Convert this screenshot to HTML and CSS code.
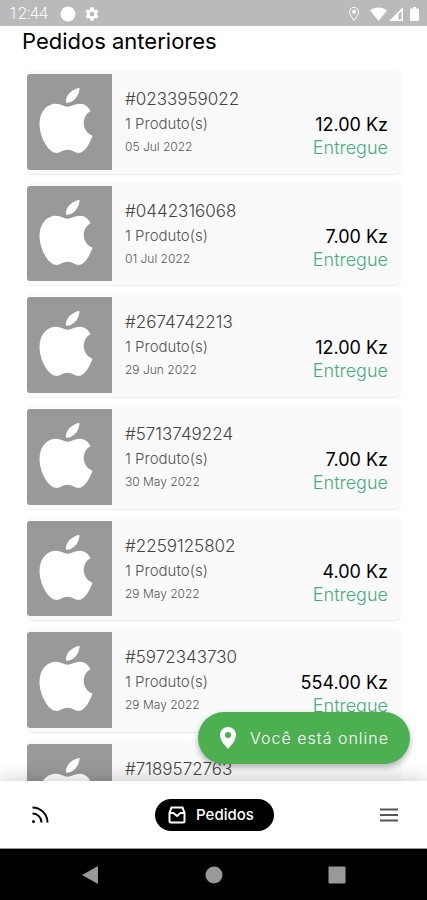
FILE: index.html
```html
<!DOCTYPE html>
<html lang="pt">
<head>
<meta charset="utf-8">
<meta name="viewport" content="width=device-width, initial-scale=1">
<title>Pedidos anteriores</title>
<link rel="stylesheet" href="styles.css">
</head>
<body>
<svg width="0" height="0" class="defs" aria-hidden="true">
  <symbol id="apple" viewBox="0 0 85 95">
    <path d="M52.500 13.500C53 20 47 29 39 28.500C38 21 45 15 52.500 13.500Z"/>
    <path d="M63.500 37C54 42 54.500 57 65.500 61.500C62.500 69.500 58.500 77 53 78.500C48.500 79.500 46 75.500 40.500 75.500C35 75.500 33 79.500 28 78.500C19 76 12.500 60 12.500 50C12.500 37 20 29.500 29 29.500C34 29.500 37 32.500 40.500 32.500C44 32.500 48 29.500 53 29.500C57.500 29.500 61.500 32.500 63.500 37Z"/>
  </symbol>
</svg>
<div class="app">
  <header class="status">
    <div class="status-group">
      <span class="clock">12:44</span>
      <svg width="16" height="16" viewBox="0 0 16 16"><circle cx="8" cy="8" r="7.500"/></svg>
      <svg width="16" height="16" viewBox="0 0 24 24"><path d="M19.400 13a7 7 0 0 0 0-2l2.100-1.600a.5.5 0 0 0 .1-.6l-2-3.500a.5.5 0 0 0-.6-.2l-2.500 1a7.300 7.300 0 0 0-1.700-1l-.4-2.600a.5.5 0 0 0-.5-.5h-4a.5.5 0 0 0-.5.500L9 5.100a7.700 7.700 0 0 0-1.700 1l-2.500-1a.5.5 0 0 0-.6.200l-2 3.500a.5.5 0 0 0 .1.600L4.500 11a8 8 0 0 0 0 2l-2.100 1.600a.5.5 0 0 0-.1.600l2 3.500c.1.200.4.300.6.200l2.500-1c.5.400 1.100.8 1.700 1l.4 2.600c0 .3.200.5.500.5h4c.3 0 .5-.2.500-.5l.4-2.600a7.300 7.300 0 0 0 1.700-1l2.500 1c.2.100.5 0 .6-.2l2-3.500a.5.5 0 0 0-.1-.6zM12 15.500a3.500 3.500 0 1 1 0-7 3.500 3.500 0 0 1 0 7z"/></svg>
    </div>
    <div class="status-group right">
      <svg class="pin" width="12" height="16" viewBox="0 0 12 16"><path class="line" d="M6 14.500C3 10.500 1.500 8 1.500 5.800a4.500 4.500 0 0 1 9 0C10.500 8 9 10.500 6 14.500Z"/><circle cx="6" cy="5.800" r="2"/></svg>
      <svg width="17" height="14" viewBox="0 0 17 14"><path d="M0 3.500C5-.5 12-.5 17 3.500L8.500 14Z"/></svg>
      <svg width="14" height="14" viewBox="0 0 14 14"><path fill-rule="evenodd" d="M14 0V14H0ZM12.500 4L9.500 7V12.500H12.500Z"/></svg>
      <svg class="battery" width="9" height="14" viewBox="0 0 9 14"><path d="M3 0h3v1.500h2a1 1 0 0 1 1 1V13a1 1 0 0 1-1 1H1a1 1 0 0 1-1-1V2.500a1 1 0 0 1 1-1h2Z"/></svg>
    </div>
  </header>

  <main class="content">
    <h1>Pedidos anteriores</h1>
    <ul class="orders">
      <li class="order">
        <div class="thumb"><svg viewBox="0 0 85 95"><use href="#apple"/></svg></div>
        <div class="info"><span class="number">#0233959022</span><span class="items">1 Produto(s)</span><span class="date">05 Jul 2022</span></div>
        <div class="total"><span class="price">12.00 Kz</span><span class="state">Entregue</span></div>
      </li>
      <li class="order">
        <div class="thumb"><svg viewBox="0 0 85 95"><use href="#apple"/></svg></div>
        <div class="info"><span class="number">#0442316068</span><span class="items">1 Produto(s)</span><span class="date">01 Jul 2022</span></div>
        <div class="total"><span class="price">7.00 Kz</span><span class="state">Entregue</span></div>
      </li>
      <li class="order">
        <div class="thumb"><svg viewBox="0 0 85 95"><use href="#apple"/></svg></div>
        <div class="info"><span class="number">#2674742213</span><span class="items">1 Produto(s)</span><span class="date">29 Jun 2022</span></div>
        <div class="total"><span class="price">12.00 Kz</span><span class="state">Entregue</span></div>
      </li>
      <li class="order">
        <div class="thumb"><svg viewBox="0 0 85 95"><use href="#apple"/></svg></div>
        <div class="info"><span class="number">#5713749224</span><span class="items">1 Produto(s)</span><span class="date">30 May 2022</span></div>
        <div class="total"><span class="price">7.00 Kz</span><span class="state">Entregue</span></div>
      </li>
      <li class="order">
        <div class="thumb"><svg viewBox="0 0 85 95"><use href="#apple"/></svg></div>
        <div class="info"><span class="number">#2259125802</span><span class="items">1 Produto(s)</span><span class="date">29 May 2022</span></div>
        <div class="total"><span class="price">4.00 Kz</span><span class="state">Entregue</span></div>
      </li>
      <li class="order">
        <div class="thumb"><svg viewBox="0 0 85 95"><use href="#apple"/></svg></div>
        <div class="info"><span class="number">#5972343730</span><span class="items">1 Produto(s)</span><span class="date">29 May 2022</span></div>
        <div class="total"><span class="price">554.00 Kz</span><span class="state">Entregue</span></div>
      </li>
      <li class="order">
        <div class="thumb"><svg viewBox="0 0 85 95"><use href="#apple"/></svg></div>
        <div class="info"><span class="number">#7189572763</span></div>
      </li>
    </ul>
  </main>

  <div class="dock">
    <button class="online" type="button">
      <svg width="16" height="22" viewBox="0 0 16 22"><path fill-rule="evenodd" d="M8 0a8 8 0 0 1 8 8c0 5-4 9.500-8 14C4 17.500 0 13 0 8a8 8 0 0 1 8-8Zm0 5a3 3 0 1 0 0 6 3 3 0 0 0 0-6Z"/></svg>
      Você está online
    </button>
    <nav class="tabs">
      <a class="tab" href="#feed" aria-label="Feed"><svg width="18" height="18" viewBox="0 0 18 18"><path d="M1.500 1.500A15 15 0 0 1 16.500 16.500M1.500 7.500A9 9 0 0 1 10.500 16.500"/><circle cx="2.500" cy="15.500" r="1.500"/></svg></a>
      <a class="tab active" href="#pedidos"><svg width="18" height="18" viewBox="0 0 18 18"><path d="M1.500 7L3.500 1.500H14.500L16.500 7V15a1.500 1.500 0 0 1-1.500 1.500H3A1.500 1.500 0 0 1 1.500 15ZM1.500 7H5.500L9 10L12.500 7H16.500"/></svg>Pedidos</a>
      <a class="tab" href="#menu" aria-label="Menu"><svg class="menu" width="18" height="14" viewBox="0 0 18 14"><path d="M0 1.500H18M0 7H18M0 12.500H18"/></svg></a>
    </nav>
  </div>

  <div class="system">
    <button type="button" aria-label="Voltar"><svg width="18" height="20" viewBox="0 0 18 20"><path d="M17 1V19L1 10Z"/></svg></button>
    <button type="button" aria-label="Início"><svg width="18" height="18" viewBox="0 0 18 18"><circle cx="9" cy="9" r="8.500"/></svg></button>
    <button type="button" aria-label="Recentes"><svg width="18" height="18" viewBox="0 0 18 18"><rect x="0.500" y="0.500" width="17" height="17" rx="1"/></svg></button>
  </div>
</div>
</body>
</html>
```
FILE: styles.css
```css
* {
  box-sizing: border-box;
}

body {
  margin: 0;
  background: #fff;
  color: #000;
  font-family: Inter, sans-serif;
}

svg {
  display: block;
  flex: none;
}

.defs {
  position: absolute;
}

button {
  padding: 0;
  border: 0;
  background: none;
  font: inherit;
}

.app {
  display: flex;
  flex-direction: column;
  height: 100vh;
}

.status {
  display: flex;
  justify-content: space-between;
  align-items: center;
  flex: none;
  height: 26px;
  padding: 2px 8px 0 9px;
  background: #bababa;
  color: #fff;
  fill: #fff;
}

.status-group {
  display: flex;
  align-items: center;
  gap: 8px;
}

.status-group.right {
  gap: 2px;
}

.clock {
  margin-right: 4px;
  font: 16px/20px Roboto, sans-serif;
  font-weight: 300;
}

.pin {
  margin-right: 8px;
}

.battery {
  margin-left: 5px;
}

.line {
  fill: none;
  stroke: #fff;
}

.content {
  flex: 1;
  min-height: 0;
  overflow: hidden;
}

h1 {
  margin: 0;
  padding: 0 22px;
  font-size: 22px;
  font-weight: 400;
  line-height: 30px;
}

.orders {
  display: flex;
  flex-direction: column;
  gap: 8px;
  margin: 14px 26px 0 27px;
  padding: 0;
  list-style: none;
}

.order {
  display: flex;
  align-items: center;
  padding: 4px 13px 4px 0;
  border-radius: 6px;
  background: #fafafa;
  box-shadow: 0 1px 1px #ececec;
}

.thumb {
  width: 85px;
  aspect-ratio: 8 / 9;
  border-radius: 3px 0 0 3px;
  background: #999;
  fill: #fff;
}

.thumb svg {
  width: 100%;
  height: 100%;
}

.info {
  display: flex;
  flex: 1;
  flex-direction: column;
  align-self: flex-start;
  padding: 13px 0 0 13px;
}

.number {
  color: #444;
  font-size: 17px;
  font-weight: 300;
  line-height: 25px;
}

.items {
  color: #555;
  font-size: 15px;
  font-weight: 300;
  line-height: 24px;
}

.date {
  color: #555;
  font-size: 12px;
  font-weight: 300;
  line-height: 22px;
}

.total {
  display: flex;
  flex-direction: column;
  align-self: flex-start;
  padding-top: 39px;
  text-align: right;
}

.price {
  font-size: 18px;
  line-height: 24px;
}

.state {
  color: #47ad7b;
  font-size: 18px;
  font-weight: 300;
  line-height: 22px;
}

.dock {
  position: relative;
  flex: none;
  background: #fff;
  box-shadow: 0 0 20px rgba(0, 0, 0, 0.22);
}

.online {
  position: absolute;
  right: 17px;
  bottom: calc(100% + 17px);
  display: flex;
  align-items: center;
  gap: 14px;
  height: 52px;
  padding: 0 21px 0 22px;
  border-radius: 26px;
  background: #4caf50;
  box-shadow: 0 3px 6px rgba(0, 0, 0, 0.3);
  color: #fff;
  fill: #fff;
  font-size: 16px;
  font-weight: 300;
  letter-spacing: 1px;
  white-space: nowrap;
}

.tabs {
  display: flex;
  justify-content: space-between;
  align-items: center;
  height: 68px;
  padding: 0 29px 0 31px;
  border-bottom: 1px solid #999;
}

.tab {
  color: #000;
  text-decoration: none;
}

.tab path {
  fill: none;
  stroke: currentColor;
  stroke-width: 2;
}

.tab .menu path {
  stroke: #555;
}

.active {
  display: flex;
  align-items: center;
  gap: 10px;
  height: 32px;
  padding: 0 20px 0 13px;
  border-radius: 16px;
  background: #000;
  color: #fff;
  font-size: 15px;
  font-weight: 500;
}

.system {
  display: flex;
  justify-content: space-between;
  align-items: center;
  flex: none;
  height: 51px;
  padding: 0 81px;
  background: #000;
  fill: #999;
}
```
